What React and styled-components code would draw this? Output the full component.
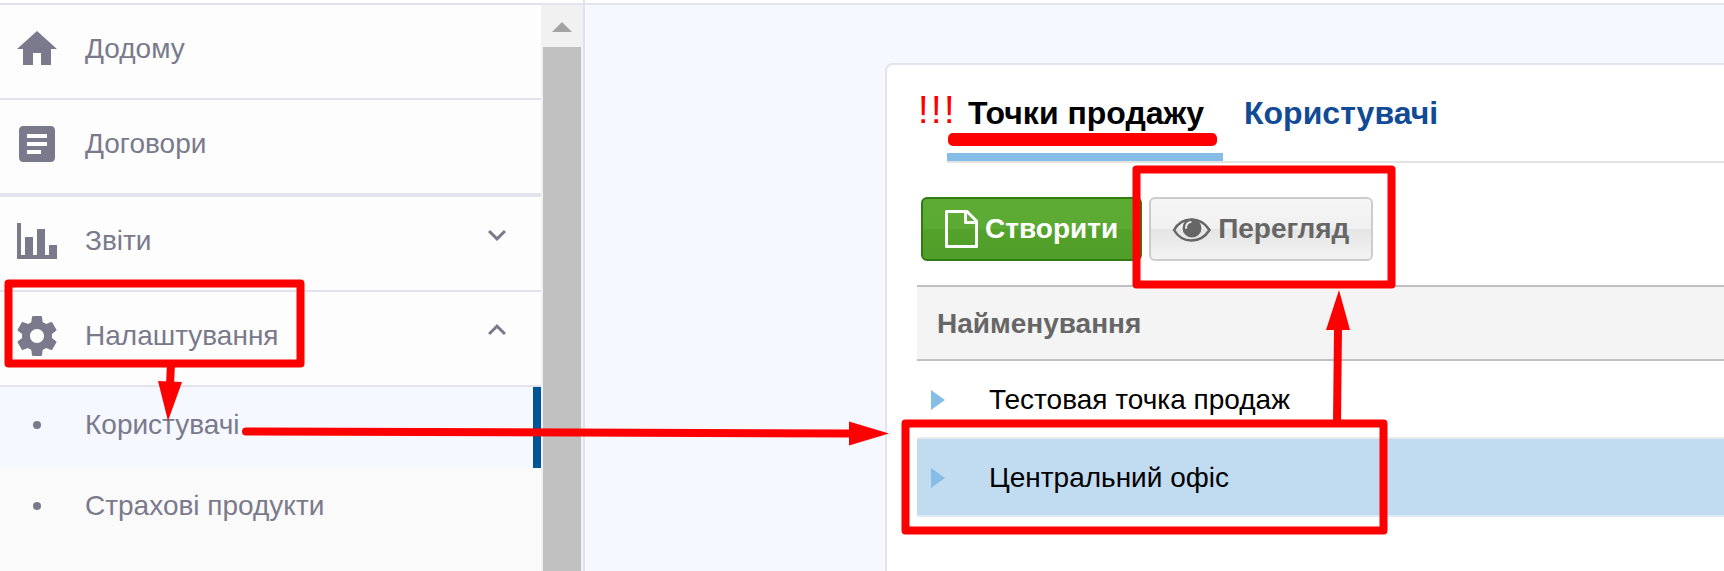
import styled, { createGlobalStyle } from "styled-components";

const GlobalStyle = createGlobalStyle`
  * {
    box-sizing: border-box;
  }
  body {
    margin: 0;
    overflow: hidden;
    font-family: "Liberation Sans", Arial, sans-serif;
    font-size: 28px;
    line-height: 48px;
    color: #000;
  }
`;

const Page = styled.div`
  position: relative;
  display: flex;
  flex-direction: column;
  height: 100vh;
  overflow: hidden;
  background: #f5f8ff;
`;

const Body = styled.div`
  flex: 1;
  display: flex;
  min-height: 0;
`;

// the bottom edge of the page header
const TopBar = styled.header`
  display: flex;
  flex: none;
  height: 5px;
  background: #fff;
  border-bottom: 2px solid #e3e3ed;
`;

const TopBrand = styled.div`
  width: 585px;
  border-right: 2px solid #e3e3ed;
`;

// sidebar
const Sidebar = styled.aside`
  display: flex;
  flex: none;
  width: 585px;
  background: #fafafa;
  border-right: 2px solid #e3e3ed;
`;

const Nav = styled.nav`
  flex: 1;
`;

const NavItem = styled.a`
  display: flex;
  gap: 24px;
  padding: 20px 26px 25px 13px;
  color: #7a7a8c;
  background: #fdfdfd;
  border-bottom: ${(props) => (props.$thick ? 4 : 2)}px solid #e3e3ed;
  text-decoration: none;
`;

const NavLabel = styled.span`
  flex: 1;
`;

const Icon = styled.svg`
  flex: none;
  width: ${(props) => props.$size || 48}px;
  height: ${(props) => props.$size || 48}px;
  fill: currentColor;
`;

const SubItem = styled(NavItem)`
  padding: 14px 18px 19px 13px;
  background: ${(props) => (props.$active ? "#f5f8ff" : "#fafafa")};
  border-bottom: 0;
  border-right: 8px solid ${(props) => (props.$active ? "#005599" : "#fafafa")};
`;

const Scrollbar = styled.div`
  display: flex;
  flex-direction: column;
  width: 42px;
  padding: 0 2px;
  background: #f1f1f1;
`;

const ScrollUp = styled.button`
  display: flex;
  align-items: flex-start;
  justify-content: center;
  height: 42px;
  padding: 17px 0 0;
  border: 0;
  background: none;

  &::before {
    content: "";
    border: 10px solid transparent;
    border-top: 0;
    border-bottom-color: #a3a3a3;
  }
`;

const ScrollThumb = styled.div`
  flex: 1;
  background: #c1c1c1;
`;

// content
const Main = styled.main`
  flex: 1;
  display: flex;
  min-width: 0;
  padding: 58px 0 0 300px;
`;

const Card = styled.section`
  flex: 1;
  padding: 16px 0 0 30px;
  background: #fff;
  border: 2px solid #e3e3ed;
  border-width: 2px 0 0 2px;
  border-radius: 8px 0 0 0;
`;

const Tabs = styled.div`
  display: flex;
  margin-left: 30px;
  border-bottom: 2px solid #e3e3e3;
`;

const Tab = styled.a`
  padding: 8px 19px 16px 21px;
  font-size: 32px;
  font-weight: bold;
  text-decoration: none;
  color: ${(props) => (props.$active ? "#000" : "#114b95")};
  border-bottom: 8px solid ${(props) => (props.$active ? "#86bde6" : "transparent")};
`;

const Toolbar = styled.div`
  display: flex;
  gap: 7px;
  padding: 34px 4px 24px;
`;

const Button = styled.button`
  display: flex;
  align-items: center;
  gap: 6px;
  height: 64px;
  padding: 0 22px 0 20px;
  font: inherit;
  font-weight: bold;
  border-radius: 6px;
  color: #666;
  border: 2px solid #ccc;
  background: linear-gradient(#f6f6f6, #f0f0f0 50%, #e4e4e4 50%, #f3f3f3);
`;

const GreenButton = styled(Button)`
  color: #fff;
  border-color: #2f7d10;
  background: linear-gradient(#5dab34, #5baa33 50%, #54a12b 50%, #509f2a);
`;

const Table = styled.table`
  width: 100%;
  border-collapse: separate;
  border-spacing: 0;
`;

const HeadCell = styled.th`
  height: 76px;
  padding: 2px 20px 0;
  text-align: left;
  color: #666;
  background: #f4f4f4;
  border: 2px solid #c0c0c0;
  border-width: 2px 0;
`;

const Cell = styled.td`
  height: 78px;
  padding: 2px 14px 0;
  background: ${(props) => (props.$selected ? "#c1dcf1" : "#fff")};
  border-bottom: 2px solid ${(props) => (props.$selected ? "#dcebf7" : "#e8eaeb")};
`;

const CellInner = styled.div`
  display: flex;
  align-items: center;
  gap: 44px;
`;

const Expander = styled.span`
  border: 10px solid transparent;
  border-left: 14px solid #86bde6;
  border-right: 0;
`;

// red marks drawn over the page
const Marks = styled.svg`
  position: absolute;
  top: 0;
  left: 0;
  width: 100%;
  height: 100%;
  pointer-events: none;
  fill: none;
  stroke: red;
  stroke-width: 8px;
  stroke-linejoin: round;
`;

const icons = {
  home: "M10 20v-6h4v6h5v-8h3L12 3 2 12h3v8z",
  article:
    "M19 3H5c-1.1 0-2 .9-2 2v14c0 1.1.9 2 2 2h14c1.1 0 2-.9 2-2V5c0-1.1-.9-2-2-2zm-5 14H7v-2h7v2zm3-4H7v-2h10v2zm0-4H7V7h10v2z",
  chart: "M2 3h2v16h2v-9h4v9h2V6h4v13h2v-5h4v7H2z",
  gear: "M19.43 12.98c.04-.32.07-.64.07-.98s-.03-.66-.07-.98l2.11-1.65c.19-.15.24-.42.12-.64l-2-3.46c-.12-.22-.39-.3-.61-.22l-2.49 1c-.52-.4-1.08-.73-1.69-.98l-.38-2.65C14.46 2.18 14.25 2 14 2h-4c-.25 0-.46.18-.49.42l-.38 2.65c-.61.25-1.17.59-1.69.98l-2.49-1c-.23-.09-.49 0-.61.22l-2 3.46c-.13.22-.07.49.12.64l2.11 1.65c-.04.32-.07.65-.07.98s.03.66.07.98l-2.11 1.65c-.19.15-.24.42-.12.64l2 3.46c.12.22.39.3.61.22l2.49-1c.52.4 1.08.73 1.69.98l.38 2.65c.03.24.24.42.49.42h4c.25 0 .46-.18.49-.42l.38-2.65c.61-.25 1.17-.59 1.69-.98l2.49 1c.23.09.49 0 .61-.22l2-3.46c.12-.22.07-.49-.12-.64l-2.11-1.65zM12 15.5c-1.93 0-3.5-1.57-3.5-3.5s1.57-3.5 3.5-3.5 3.5 1.57 3.5 3.5-1.57 3.5-3.5 3.5z",
  bullet: "M12 10a2 2 0 1 0 0 4 2 2 0 0 0 0-4z",
  down: "M7.41 8.59 12 13.17l4.59-4.58L18 10l-6 6-6-6z",
  up: "M7.41 15.41 12 10.83l4.59 4.58L18 14l-6-6-6 6z",
};

const menu = [
  { icon: "home", label: "Додому" },
  { icon: "article", label: "Договори", thick: true },
  { icon: "chart", label: "Звіти", arrow: "down" },
  { icon: "gear", label: "Налаштування", arrow: "up" },
];

const submenu = [{ label: "Користувачі", active: true }, { label: "Страхові продукти" }];

const points = [{ name: "Тестовая точка продаж" }, { name: "Центральний офіс", selected: true }];

function MenuIcon({ name, size }) {
  return (
    <Icon viewBox="0 0 24 24" $size={size} aria-hidden="true">
      <path d={icons[name]} />
    </Icon>
  );
}

function FileIcon() {
  return (
    <svg width="36" height="38" viewBox="0 0 36 38" fill="none" stroke="#fff" strokeWidth="3" aria-hidden="true">
      <path d="M3.5 1.5H24L33.5 11V36.5H3.5Z M22.5 2V12.5H33" strokeLinejoin="round" />
    </svg>
  );
}

function EyeIcon() {
  return (
    <svg width="41" height="28" viewBox="0 0 41 28" aria-hidden="true">
      <path
        d="M3 15C7 8 13 4.5 20.5 4.5S34 8 38.5 15C34 22 28 25.500 20.500 25.500S7 22 3 15Z"
        fill="none"
        stroke="#666"
        strokeWidth="2.5"
      />
      <circle cx="21" cy="13" r="9.5" fill="#666" />
      <path d="M15 13Q15 8 19.5 7" fill="none" stroke="#eee" strokeWidth="2" strokeLinecap="round" />
    </svg>
  );
}

function App() {
  return (
    <Page>
      <GlobalStyle />
      <TopBar>
        <TopBrand />
      </TopBar>
      <Body>
        <Sidebar>
          <Nav>
            {menu.map((item) => (
              <NavItem key={item.label} href="#" $thick={item.thick}>
                <MenuIcon name={item.icon} />
                <NavLabel>{item.label}</NavLabel>
                {item.arrow && <MenuIcon name={item.arrow} size={36} />}
              </NavItem>
            ))}
            {submenu.map((item) => (
              <SubItem key={item.label} href="#" $active={item.active}>
                <MenuIcon name="bullet" />
                <NavLabel>{item.label}</NavLabel>
              </SubItem>
            ))}
          </Nav>
          <Scrollbar>
            <ScrollUp aria-label="Вгору" />
            <ScrollThumb />
          </Scrollbar>
        </Sidebar>
        <Main>
          <Card>
            <Tabs>
              <Tab href="#" $active>
                Точки продажу
              </Tab>
              <Tab href="#">Користувачі</Tab>
            </Tabs>
            <Toolbar>
              <GreenButton>
                <FileIcon />
                Створити
              </GreenButton>
              <Button>
                <EyeIcon />
                Перегляд
              </Button>
            </Toolbar>
            <Table>
              <thead>
                <tr>
                  <HeadCell>Найменування</HeadCell>
                </tr>
              </thead>
              <tbody>
                {points.map((point) => (
                  <tr key={point.name}>
                    <Cell $selected={point.selected}>
                      <CellInner>
                        <Expander />
                        {point.name}
                      </CellInner>
                    </Cell>
                  </tr>
                ))}
              </tbody>
            </Table>
          </Card>
        </Main>
      </Body>
      <Marks>
        <rect x="8.5" y="283.5" width="292" height="80" />
        <rect x="1136.5" y="169.5" width="255" height="115" />
        <rect x="905.5" y="423.5" width="478" height="107" />
        <path d="M171 363L170 385M1337 423L1338 328" />
        <path d="M246 431.5L852 433.5" strokeLinecap="round" />
        <g fill="red" stroke="none">
          <rect x="948" y="133" width="269" height="13" rx="5" />
          <path d="M158 381L182 382L168 421Z" />
          <path d="M849 421.5V445.5L889 433.5Z" />
          <path d="M1326 330H1350L1339 290Z" />
          <text x="918 931 944" y="123" fontSize="38">
            !!!
          </text>
        </g>
      </Marks>
    </Page>
  );
}

export default App;
